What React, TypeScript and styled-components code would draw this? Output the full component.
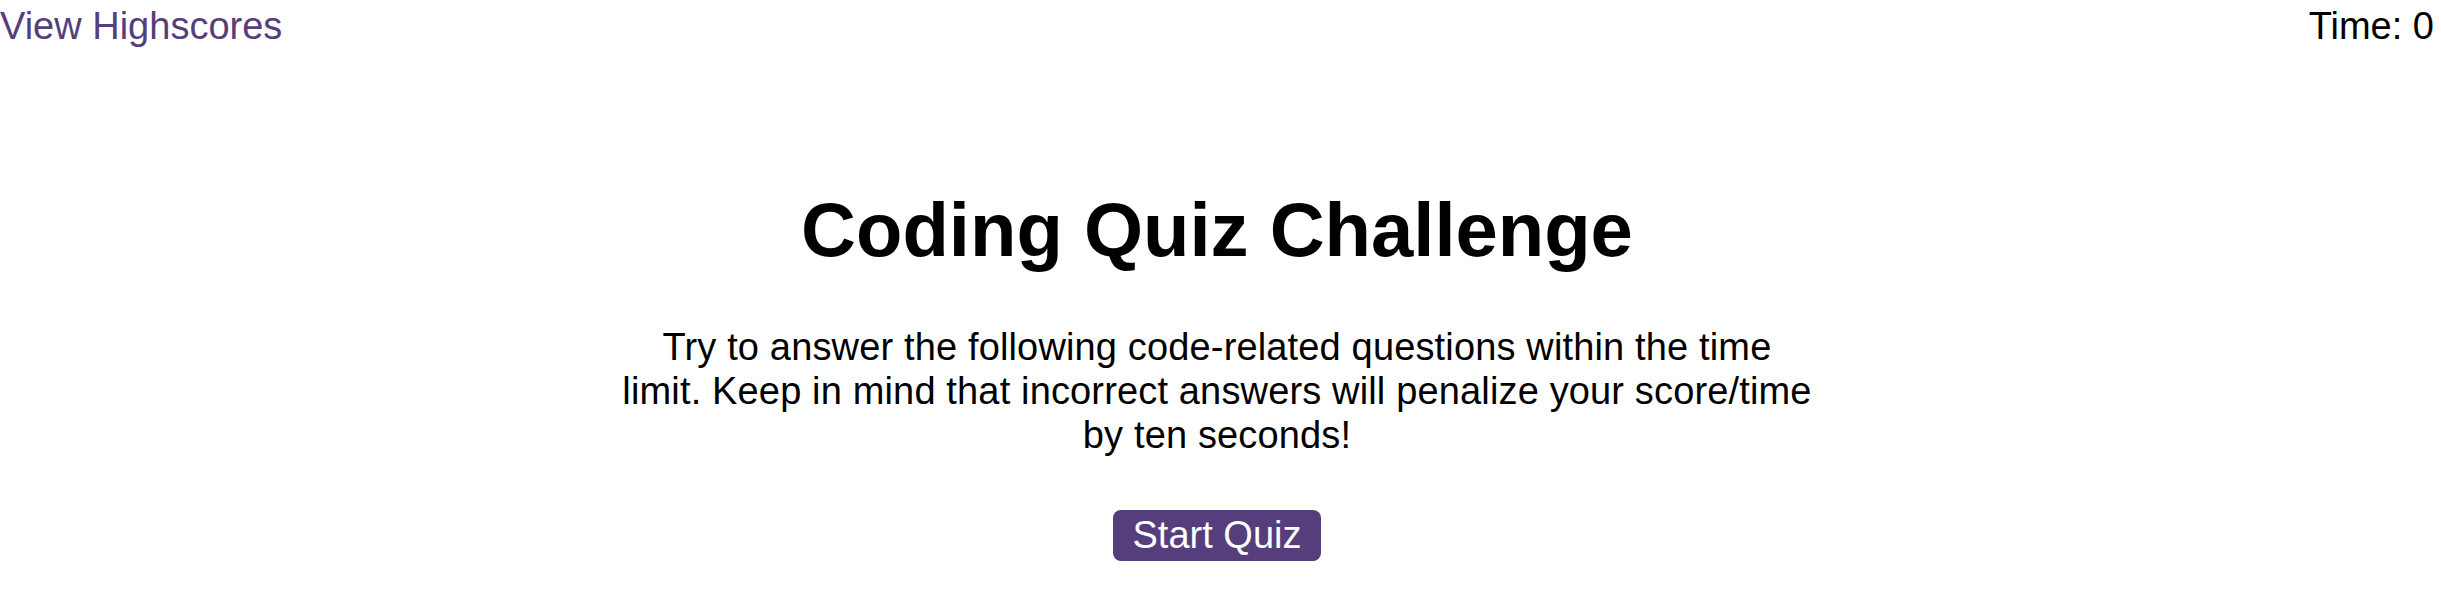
import React, { useState } from "react";
import styled, { createGlobalStyle } from "styled-components";

const GlobalStyle = createGlobalStyle`
  body {
    margin: 0;
    background: #ffffff;
    color: #000000;
    font-family: "Liberation Sans", Arial, sans-serif;
    font-size: 38px;
  }
`;

const Page = styled.div`
  padding: 5px 7px 0 0;
`;

const Header = styled.header`
  display: flex;
  justify-content: space-between;
  align-items: baseline;
`;

const HighscoresLink = styled.a`
  color: #563d7c;
  text-decoration: none;
  cursor: pointer;
`;

const Timer = styled.span`
  color: #000000;
`;

const Intro = styled.main`
  display: flex;
  flex-direction: column;
  align-items: center;
  max-width: 1220px;
  margin: 0 auto;
  text-align: center;
`;

const Title = styled.h1`
  margin: 138px 0 0;
  font-size: 76px;
  font-weight: bold;
`;

const Description = styled.p`
  max-width: 1190px;
  margin: 52px 0 0;
  line-height: 44px;
  letter-spacing: 0.15px;
`;

const StartButton = styled.button`
  margin-top: 53px;
  padding: 4px 20px;
  border: none;
  border-radius: 8px;
  background: #563d7c;
  color: #ffffff;
  font-family: inherit;
  font-size: 38px;
  cursor: pointer;
`;

const App: React.FC = () => {
  const [time] = useState(0);

  return (
    <>
      <GlobalStyle />
      <Page>
        <Header>
          <HighscoresLink>View Highscores</HighscoresLink>
          <Timer>Time: {time}</Timer>
        </Header>
        <Intro>
          <Title>Coding Quiz Challenge</Title>
          <Description>
            Try to answer the following code-related questions within the time
            limit. Keep in mind that incorrect answers will penalize your
            score/time by ten seconds!
          </Description>
          <StartButton>Start Quiz</StartButton>
        </Intro>
      </Page>
    </>
  );
};

export default App;
